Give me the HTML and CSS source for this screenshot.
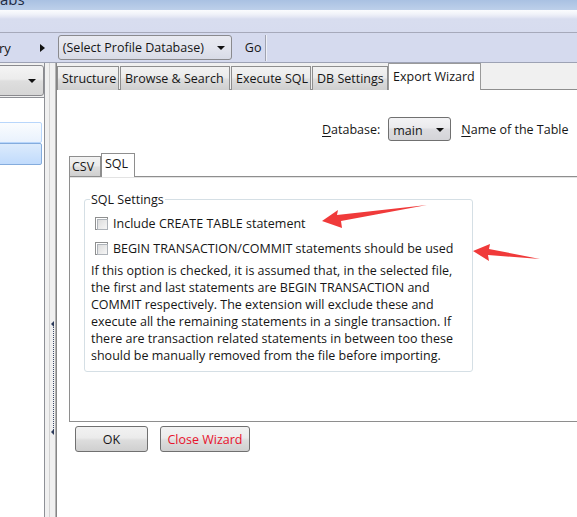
FILE: index.html
```html
<!DOCTYPE html>
<html>
<head>
<meta charset="utf-8">
<title>Export Wizard</title>
<link rel="stylesheet" href="styles.css">
</head>
<body>
<div class="app">
  <div class="titlebar"><span class="title-text">abs</span></div>
  <div class="menuband"></div>
  <div class="toolbar">
    <span class="tb-label">ry</span>
    <span class="tb-chevron"></span>
    <div class="combo profile-combo"><span class="combo-text">(Select Profile Database)</span><span class="combo-arrow"></span></div>
    <span class="go">Go</span>
    <span class="tb-sep"></span>
  </div>
  <div class="main">
    <aside class="sidebar">
      <div class="combo side-combo"><span class="combo-arrow"></span></div>
      <div class="side-list">
        <div class="side-item hover"></div>
        <div class="side-item selected"></div>
      </div>
    </aside>
    <div class="splitter"><div class="split-line"></div><div class="grip"></div></div>
    <section class="content">
      <div class="tabs">
        <span class="tab tab-structure">Structure</span>
        <span class="tab tab-browse">Browse &amp; Search</span>
        <span class="tab tab-execute">Execute SQL</span>
        <span class="tab tab-db">DB Settings</span>
        <span class="tab tab-export active">Export Wizard</span>
      </div>
      <div class="page">
        <div class="db-row">
          <span class="lbl"><u>D</u>atabase:</span>
          <div class="combo db-combo"><span class="combo-text">main</span><span class="combo-arrow"></span></div>
          <span class="lbl"><u>N</u>ame of the Table</span>
        </div>
        <div class="subtabs">
          <span class="subtab csv">CSV</span>
          <span class="subtab sql active">SQL</span>
        </div>
        <div class="subpanel">
          <fieldset class="group">
            <legend>SQL Settings</legend>
            <label class="check first"><span class="box"></span>Include CREATE TABLE statement</label>
            <label class="check"><span class="box"></span>BEGIN TRANSACTION/COMMIT statements should be used</label>
            <p class="note">If this option is checked, it is assumed that, in the selected file,<br>the first and last statements are BEGIN TRANSACTION and<br>COMMIT respectively. The extension will exclude these and<br>execute all the remaining statements in a single transaction. If<br>there are transaction related statements in between too these<br>should be manually removed from the file before importing.</p>
          </fieldset>
        </div>
        <div class="buttons">
          <button class="btn ok">OK</button>
          <button class="btn close">Close Wizard</button>
        </div>
      </div>
    </section>
  </div>
  <svg class="annotations" width="577" height="517" viewBox="0 0 577 517">
    <polygon points="322,221 338,210 337,215 427,205 341,221 342,228" fill="#f03a3a"/>
    <polygon points="473,251 490,244 489,249 540,259 488,255 489,261" fill="#f03a3a"/>
  </svg>
</div>
</body>
</html>
```

FILE: styles.css
```css
* { box-sizing: border-box; }
html, body { margin: 0; padding: 0; background: #fff; }
.app {
  position: relative;
  width: 577px;
  height: 517px;
  overflow: hidden;
  font-family: "Open Sans", "Noto Sans", sans-serif;
  font-size: 12.5px;
  color: #161616;
  background: #fff;
  display: flex;
  flex-direction: column;
}

/* title + menu band */
.titlebar {
  height: 10px;
  flex: none;
  overflow: hidden;
  background: linear-gradient(#a9c1e2, #bdd0ea);
}
.title-text {
  display: block;
  margin-top: -9px;
  font-size: 15px;
  line-height: 16px;
  color: #1e2c44;
}
.menuband {
  height: 22px;
  flex: none;
  background: linear-gradient(#fbfcfe 0, #f1f3f9 4px, #e4e7f4 7px, #d8ddef 9px, #d7dcef 100%);
}

/* toolbar */
.toolbar {
  height: 31px;
  flex: none;
  border-top: 1px solid #a6a9ba;
  border-bottom: 1px solid #9da2b4;
  background: #d5daee;
  display: flex;
  align-items: center;
}
.tb-label { margin-left: -1px; font-size: 13px; }
.tb-chevron {
  width: 0; height: 0;
  margin-left: 29px;
  border-top: 4px solid transparent;
  border-bottom: 4px solid transparent;
  border-left: 5px solid #111;
}
.combo {
  display: flex;
  align-items: center;
  border: 1px solid #8a8a8e;
  border-radius: 3px;
  background: linear-gradient(#f3f3f5 0%, #eaeaed 45%, #dcdce0 50%, #d4d4d8 100%);
}
.combo-arrow {
  width: 0; height: 0;
  border-left: 4px solid transparent;
  border-right: 4px solid transparent;
  border-top: 4px solid #111;
}
.profile-combo {
  margin-left: 13px;
  width: 174px;
  height: 25px;
  padding: 0 6px 0 4px;
  justify-content: space-between;
  background: linear-gradient(#e9eaf1 0%, #e3e5ee 50%, #d8dbe6 100%);
}
.combo-text { white-space: nowrap; }
.go { margin-left: 13px; }
.tb-sep {
  width: 1px;
  height: 26px;
  margin-left: 4px;
  background: #a0a3b0;
  box-shadow: 1px 0 0 #eef0f8;
}

/* main */
.main { flex: 1; display: flex; min-height: 0; }
.sidebar {
  width: 45px;
  flex: none;
  display: flex;
  flex-direction: column;
  background: #f0f0f0;
  border-right: 1px solid #8e9096;
}
.side-combo {
  margin: 2px 0 0 -4px;
  height: 31px;
  width: 48px;
  justify-content: flex-end;
  padding-right: 7px;
  background: linear-gradient(#f4f4f4 0%, #ececec 45%, #dedede 52%, #d6d6d6 100%);
}
.side-list {
  flex: 1;
  margin-top: 1px;
  border-top: 1px solid #8e9096;
  background: #fff;
  padding-top: 24px;
}
.side-item {
  margin-left: -4px;
  width: 46px;
  border-radius: 2px;
}
.side-item.hover {
  height: 21px;
  border: 1px solid #b8d6fb;
  background: linear-gradient(#fafcfe, #e9f2fd);
}
.side-item.selected {
  height: 22px;
  border: 1px solid #84acdd;
  background: linear-gradient(#dcebfc, #c1dbfc);
}

.splitter {
  width: 11px;
  flex: none;
  background: #f0f0f0;
  display: flex;
  border-right: 1px solid #b4b4b4;
}
.split-line {
  width: 1px;
  margin-left: 4px;
  background: #d2d2d2;
}
.grip {
  position: relative;
  margin: 261px 0 0 3px;
  width: 1px;
  height: 108px;
  border-left: 1px dotted #3c4a6a;
}
.grip::before, .grip::after {
  content: "";
  position: absolute;
  left: -3px;
  width: 0; height: 0;
  border-top: 3px solid transparent;
  border-bottom: 3px solid transparent;
  border-right: 3px solid #2c3a5a;
}
.grip::before { top: -3px; }
.grip::after { bottom: -3px; }

.content {
  flex: 1;
  min-width: 0;
  display: flex;
  flex-direction: column;
  border-left: 1px solid #858585;
  background: #fff;
}

/* tabs */
.tabs {
  height: 27px;
  flex: none;
  background: #f0f0f0;
  border-bottom: 1px solid #8e8e8e;
  display: flex;
  align-items: flex-end;
}
.tab {
  height: 24px;
  margin-bottom: -1px;
  padding: 0 0 0 4px;
  display: flex;
  align-items: center;
  white-space: nowrap;
  border: 1px solid #8e8e8e;
  border-bottom: none;
  background: linear-gradient(#f2f2f2 0%, #ebebeb 45%, #dddddd 55%, #cfcfcf 100%);
  margin-right: 1px;
}
.tab-structure { width: 62px; }
.tab-browse { width: 110px; }
.tab-execute { width: 80px; }
.tab-db { width: 76px; margin-right: 0; }
.tab-export { width: 93px; }
.tab.active {
  height: 27px;
  background: #fff;
  border-color: #9a9a9a;
  padding-bottom: 2px;
}

.page {
  flex: 1;
  display: flex;
  flex-direction: column;
  padding-left: 12px;
}
.db-row {
  margin-top: 27px;
  height: 24px;
  display: flex;
  align-items: center;
  padding-left: 253px;
  white-space: nowrap;
}
.db-combo {
  margin: 0 10px 0 8px;
  width: 63px;
  height: 24px;
  padding: 2px 6px 0 4px;
  justify-content: space-between;
  border-color: #707070;
}
.lbl u { text-decoration-thickness: 1px; text-underline-offset: 2px; }

.subtabs {
  margin-top: 12px;
  height: 23px;
  display: flex;
  align-items: flex-end;
}
.subtab {
  display: flex;
  align-items: center;
  height: 20px;
  padding-left: 2px;
  border: 1px solid #8e8e8e;
  border-bottom: none;
  background: linear-gradient(#f2f2f2 0%, #ebebeb 45%, #dddddd 55%, #cfcfcf 100%);
}
.subtab.csv { width: 32px; }
.subtab.sql {
  width: 34px;
  height: 24px;
  margin-bottom: -1px;
  padding: 0 0 4px 3px;
  background: #fff;
  position: relative;
}

.subpanel {
  flex: none;
  height: 246px;
  margin-right: -30px;
  border: 1px solid #8e8e8e;
  box-shadow: inset 0 1px 0 #e3e3e3;
  padding: 14px 0 0 14px;
}
.group {
  width: 389px;
  margin: 0;
  padding: 0 6px 7px 6px;
  border: 1px solid #d5dfe5;
  border-radius: 3px;
}
.group legend {
  padding: 0 1px;
  margin-left: -1px;
  line-height: 17px;
}
.check {
  display: flex;
  align-items: center;
  height: 17px;
  margin-left: 4px;
  white-space: nowrap;
}
.check.first { margin-top: 7px; margin-bottom: 8px; }
.box {
  width: 13px;
  height: 13px;
  margin-right: 5px;
  border: 1px solid #8e8f8f;
  background: #fff;
  padding: 1px;
  position: relative;
}
.box::after {
  content: "";
  display: block;
  width: 100%;
  height: 100%;
  border: 1px solid #aeb3b9;
  background: linear-gradient(135deg, #dcdcdc, #f6f6f6);
}
.note {
  margin: 5px 0 0 0;
  line-height: 17px;
  white-space: nowrap;
}

.buttons {
  display: flex;
  margin-top: 4px;
  padding-left: 6px;
}
.btn {
  font: inherit;
  height: 26px;
  border: 1px solid #707070;
  border-radius: 3px;
  background: linear-gradient(#f2f2f2 0%, #ebebeb 45%, #dddddd 55%, #cfcfcf 100%);
  padding: 0;
  color: #161616;
}
.btn.ok { width: 73px; }
.btn.close { width: 90px; margin-left: 12px; color: #e8122c; }

.annotations {
  position: absolute;
  left: 0;
  top: 0;
  pointer-events: none;
}
```
